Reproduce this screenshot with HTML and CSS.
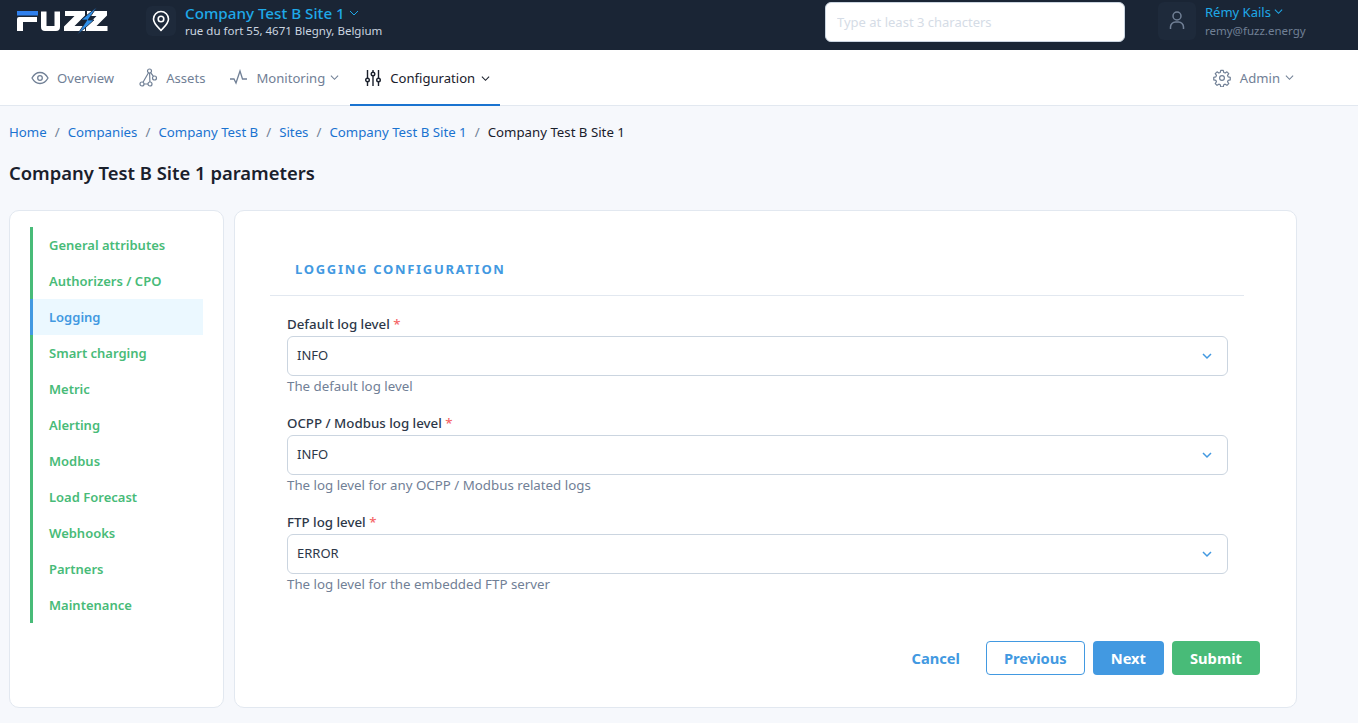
FILE: index.html
```html
<!DOCTYPE html>
<html lang="en">
<head>
    <meta charset="UTF-8">
    <title>Company Test B Site 1 parameters</title>
    <link rel="stylesheet" href="styles.css">
</head>
<body>
    <header class="topbar">
        <svg class="logo" viewBox="0 0 92 30" width="92" height="30">
            <path d="M1 5h21v4.500H1z" fill="#2f80ed"/>
            <path d="M3 11h18v5H7v9H1V13a2 2 0 0 1 2-2z" fill="#fff"/>
            <path d="M25 5.500h5.500V20h8V5.500H44V21a4 4 0 0 1-4 4H29a4 4 0 0 1-4-4z" fill="#fff"/>
            <path d="M49 5h20v4.500L58.500 20H69v5H48v-4.500L58.500 10H49zM71 5h20v4.500L80.500 20H91.500v5H70v-4.500L80.500 10H71z" fill="#fff"/>
            <path d="M81 1L65 14h6L61 29l17-15h-6z" fill="#2f8fe8" stroke="#1a2535" stroke-width=".8"/>
        </svg>
        <div class="site">
            <span class="icon-box">
                <svg width="24" height="24" viewBox="0 0 24 24" fill="none" stroke="#fff" stroke-width="1.600" stroke-linejoin="round">
                    <path d="M12 21.500c-1.500-2-7.500-6.500-7.500-11.500a7.500 7.500 0 0 1 15 0c0 5-6 9.500-7.500 11.500z"/>
                    <circle cx="12" cy="10" r="2.800"/>
                </svg>
            </span>
            <div>
                <div class="site-name">Company Test B Site 1
                    <svg class="chev" width="10" height="10" viewBox="0 0 10 10"><path d="M1 3l4 4 4-4" fill="none" stroke="currentColor" stroke-width="1"/></svg>
                </div>
                <div class="site-address">rue du fort 55, 4671 Blegny, Belgium</div>
            </div>
        </div>
        <input class="search" type="text" placeholder="Type at least 3 characters">
        <div class="user">
            <span class="icon-box user-box">
                <svg width="20" height="24" viewBox="0 0 20 24" fill="none" stroke="#718096" stroke-width="1.500">
                    <circle cx="10" cy="7" r="4"/>
                    <path d="M3.500 20v-2a5 5 0 0 1 5-5h3a5 5 0 0 1 5 5v2"/>
                </svg>
            </span>
            <div>
                <div class="user-name">Rémy Kails
                    <svg class="chev" width="9" height="9" viewBox="0 0 10 10"><path d="M1 3l4 4 4-4" fill="none" stroke="currentColor" stroke-width="1.200"/></svg>
                </div>
                <div class="user-mail">remy@fuzz.energy</div>
            </div>
        </div>
    </header>

    <nav class="tabs">
        <a class="tab">
            <svg width="18" height="18" viewBox="0 0 18 18" fill="none" stroke="currentColor" stroke-width="1.300"><path d="M1 9s3-5.500 8-5.500S17 9 17 9s-3 5.500-8 5.500S1 9 1 9z"/><circle cx="9" cy="9" r="2.300"/></svg>
            Overview
        </a>
        <a class="tab">
            <svg width="19" height="20" viewBox="0 0 18 20" fill="none" stroke="currentColor" stroke-width="1.200"><circle cx="10" cy="3" r="2"/><circle cx="15" cy="10" r="2"/><circle cx="2.500" cy="16" r="2"/><circle cx="10.500" cy="16" r="2"/><path d="M9 4.800L3.500 14.300M10.100 5l.3 9M11.200 4.600l2.700 3.800M4.500 16h4"/></svg>
            Assets
        </a>
        <a class="tab">
            <svg width="18" height="18" viewBox="0 0 18 18" fill="none" stroke="currentColor" stroke-width="1.300"><path d="M0 10h4l2 4 4-12 2.500 8H17"/></svg>
            Monitoring
            <svg class="chev" width="9" height="9" viewBox="0 0 10 10"><path d="M1 3l4 4 4-4" fill="none" stroke="currentColor" stroke-width="1.200"/></svg>
        </a>
        <a class="tab active">
            <svg width="16" height="18" viewBox="0 0 16 18" fill="none" stroke="currentColor" stroke-width="1.400"><path d="M2.500 1v8M2.500 13v4M8 1v2M8 7v10M13.500 1v8M13.500 13v4"/><circle cx="2.500" cy="11" r="1.800"/><circle cx="8" cy="5" r="1.800"/><circle cx="13.500" cy="11" r="1.800"/></svg>
            Configuration
            <svg class="chev" width="9" height="9" viewBox="0 0 10 10"><path d="M1 3l4 4 4-4" fill="none" stroke="currentColor" stroke-width="1.200"/></svg>
        </a>
        <a class="tab admin">
            <svg width="18" height="18" viewBox="0 0 24 24" fill="none" stroke="currentColor" stroke-width="1.600" stroke-linejoin="round"><path d="M10.300 2.300h3.400l.6 2.800 1.900.8 2.400-1.600 2.400 2.400-1.600 2.400.8 1.900 2.800.6v3.400l-2.800.6-.8 1.900 1.600 2.400-2.400 2.400-2.400-1.600-1.900.8-.6 2.800h-3.400l-.6-2.800-1.900-.8-2.400 1.600-2.400-2.400 1.600-2.400-.8-1.900-2.800-.6v-3.400l2.800-.6.8-1.900L3 6.700l2.400-2.400 2.400 1.600 1.900-.8z" transform="translate(0 -.5)"/><circle cx="12" cy="12" r="3.200"/></svg>
            Admin
            <svg class="chev" width="9" height="9" viewBox="0 0 10 10"><path d="M1 3l4 4 4-4" fill="none" stroke="currentColor" stroke-width="1.200"/></svg>
        </a>
    </nav>

    <main class="content">
        <div class="breadcrumb">
            <a>Home</a><span>/</span>
            <a>Companies</a><span>/</span>
            <a>Company Test B</a><span>/</span>
            <a>Sites</a><span>/</span>
            <a>Company Test B Site 1</a><span>/</span>
            <b>Company Test B Site 1</b>
        </div>
        <h1>Company Test B Site 1 parameters</h1>

        <div class="layout">
            <aside class="card side">
                <ul class="steps">
                    <li>General attributes</li>
                    <li>Authorizers / CPO</li>
                    <li class="current">Logging</li>
                    <li>Smart charging</li>
                    <li>Metric</li>
                    <li>Alerting</li>
                    <li>Modbus</li>
                    <li>Load Forecast</li>
                    <li>Webhooks</li>
                    <li>Partners</li>
                    <li>Maintenance</li>
                </ul>
            </aside>

            <section class="card form-card">
                <h2>LOGGING CONFIGURATION</h2>
                <div class="fields">
                    <div class="field">
                        <label>Default log level <em>*</em></label>
                        <div class="select">INFO
                            <svg width="12" height="12" viewBox="0 0 12 12"><path d="M2 4l4 4 4-4" fill="none" stroke="#4299e1" stroke-width="1.500"/></svg>
                        </div>
                        <p>The default log level</p>
                    </div>
                    <div class="field">
                        <label>OCPP / Modbus log level <em>*</em></label>
                        <div class="select">INFO
                            <svg width="12" height="12" viewBox="0 0 12 12"><path d="M2 4l4 4 4-4" fill="none" stroke="#4299e1" stroke-width="1.500"/></svg>
                        </div>
                        <p>The log level for any OCPP / Modbus related logs</p>
                    </div>
                    <div class="field">
                        <label>FTP log level <em>*</em></label>
                        <div class="select">ERROR
                            <svg width="12" height="12" viewBox="0 0 12 12"><path d="M2 4l4 4 4-4" fill="none" stroke="#4299e1" stroke-width="1.500"/></svg>
                        </div>
                        <p>The log level for the embedded FTP server</p>
                    </div>
                </div>
                <div class="actions">
                    <button class="btn link">Cancel</button>
                    <button class="btn outline">Previous</button>
                    <button class="btn blue">Next</button>
                    <button class="btn green">Submit</button>
                </div>
            </section>
        </div>
    </main>
</body>
</html>
```

FILE: styles.css
```css
* {
    box-sizing: border-box;
}
html, body {
    height: 100%;
}
body {
    margin: 0;
    background-color: #f6f8fc;
    font-family: "Noto Sans", sans-serif;
    font-size: 14px;
    color: #1a202c;
    overflow: hidden;
}

/* top bar */
.topbar {
    display: flex;
    align-items: center;
    height: 50px;
    background-color: #1a2535;
    padding-left: 16px;
    padding-bottom: 8px;
}
.logo {
    flex: none;
}
.icon-box {
    display: flex;
    align-items: center;
    justify-content: center;
    width: 30px;
    height: 30px;
    border-radius: 6px;
    background-color: #1e2a3b;
}
.site {
    display: flex;
    align-items: center;
    gap: 9px;
    margin-left: 38px;
    width: 679px;
    flex: none;
}
.site-name {
    font-size: 15.200px;
    font-weight: 500;
    line-height: 20px;
    color: #1fa9e8;
}
.site-address {
    font-size: 11.500px;
    line-height: 16px;
    color: #cbd5e0;
}
.chev {
    display: inline-block;
    vertical-align: 1px;
}
.search {
    width: 300px;
    height: 40px;
    margin-top: 2px;
    padding: 0 11px 1px;
    border: 1px solid #cbd5e0;
    border-radius: 6px;
    background-color: #fff;
    font-family: inherit;
    font-size: 13px;
}
.search::placeholder {
    color: #d5dce6;
}
.user {
    display: flex;
    align-items: center;
    gap: 9px;
    margin-left: 33px;
}
.user-box {
    width: 38px;
    height: 38px;
}
.user-name {
    font-size: 13px;
    line-height: 20px;
    color: #1fa9e8;
}
.user-mail {
    font-size: 11.500px;
    line-height: 18px;
    color: #718096;
}

/* tabs */
.tabs {
    display: flex;
    align-items: stretch;
    height: 56px;
    padding-left: 21px;
    background-color: #fff;
    border-bottom: 1px solid #e2e8f0;
}
.tab {
    display: flex;
    align-items: center;
    gap: 8px;
    padding: 0 10px;
    margin-right: 5px;
    color: #718096;
    font-size: 13.100px;
}
.tab .chev {
    margin-left: -3px;
}
.tab.active {
    gap: 9px;
    padding: 2px 10px 0 15px;
    margin: 0 0 -1px -4px;
    color: #1a202c;
    border-bottom: 2px solid #1a73d0;
}
.tab.admin {
    gap: 9px;
    margin-left: auto;
    margin-right: 54px;
}
.tab.admin .chev {
    margin-left: -4px;
}

/* content */
.content {
    padding: 0 61px 0 9px;
}
.breadcrumb {
    display: flex;
    align-items: center;
    gap: 8px;
    height: 20px;
    margin-top: 16px;
    font-size: 13.250px;
}
.breadcrumb a {
    color: #1a73d0;
}
.breadcrumb span {
    color: #718096;
}
.breadcrumb b {
    font-weight: 400;
    color: #1a202c;
}
h1 {
    margin: 18px 0 24px;
    font-size: 18.400px;
    line-height: 26px;
    font-weight: 600;
    color: #1a202c;
}
.layout {
    display: flex;
    gap: 10px;
    align-items: stretch;
}
.card {
    background-color: #fff;
    border: 1px solid #e2e8f0;
    border-radius: 10px;
}
.side {
    width: 215px;
    flex: none;
    padding: 16px 20px;
}
.steps {
    list-style: none;
    margin: 0;
    padding: 0;
    border-left: 3px solid #48bb78;
}
.steps li {
    height: 36px;
    line-height: 36px;
    padding-left: 16px;
    font-size: 13px;
    font-weight: 600;
    color: #48bb78;
}
.steps li.current {
    margin-left: -3px;
    border-left: 3px solid #4299e1;
    background-color: #ebf8ff;
    color: #4299e1;
}

/* form */
.form-card {
    flex: 1;
    height: 498px;
    padding: 0 52px 0 35px;
}
h2 {
    margin: 0;
    padding: 48px 25px 16px;
    border-bottom: 1px solid #e2e8f0;
    font-size: 13px;
    line-height: 20px;
    font-weight: 700;
    letter-spacing: 1.700px;
    color: #4299e1;
}
.fields {
    padding: 18px 16px 0 17px;
}
.field {
    margin-bottom: 17px;
}
.field label {
    display: block;
    margin-bottom: 2px;
    font-size: 13.300px;
    line-height: 20px;
    font-weight: 500;
    color: #2d3748;
}
.field em {
    font-style: normal;
    color: #f56565;
}
.select {
    display: flex;
    align-items: center;
    justify-content: space-between;
    height: 40px;
    padding: 0 14px 2px 9px;
    border: 1px solid #cbd5e0;
    border-radius: 6px;
    font-size: 13px;
    color: #2d3748;
}
.select svg {
    margin-top: 2px;
}
.field p {
    margin: 0;
    font-size: 13.300px;
    line-height: 20px;
    color: #718096;
}
.actions {
    display: flex;
    justify-content: flex-end;
    gap: 8px;
    margin: 47px -16px 0 0;
}
.btn {
    height: 34px;
    padding: 0 17px;
    border: 1px solid transparent;
    border-radius: 4px;
    font-family: inherit;
    font-size: 14.700px;
    font-weight: 700;
    cursor: pointer;
}
.btn.link {
    background: none;
    color: #4299e1;
}
.btn.outline {
    background-color: #fff;
    border-color: #4299e1;
    color: #4299e1;
}
.btn.blue {
    background-color: #4299e1;
    color: #fff;
}
.btn.green {
    background-color: #48bb78;
    color: #fff;
}
```
